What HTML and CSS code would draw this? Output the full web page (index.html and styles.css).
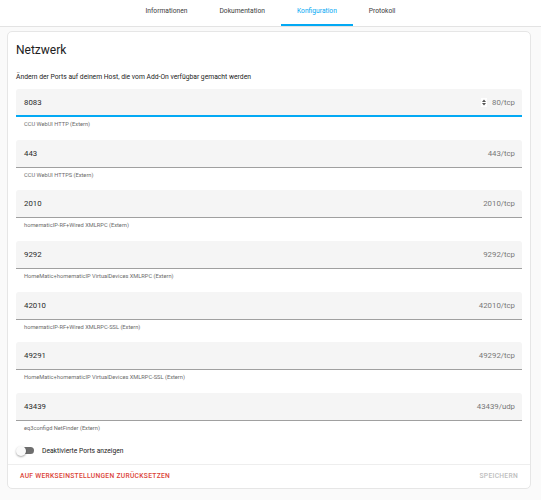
FILE: index.html
```html
<!DOCTYPE html>
<html lang="de">
<head>
<meta charset="utf-8">
<title>Konfiguration</title>
<link rel="stylesheet" href="styles.css">
</head>
<body>
<nav class="tabs">
  <div class="tab">Informationen</div>
  <div class="tab">Dokumentation</div>
  <div class="tab active">Konfiguration</div>
  <div class="tab">Protokoll</div>
</nav>
<main class="main">
  <section class="card">
    <h1 class="card-header">Netzwerk</h1>
    <div class="card-content">
      <p class="desc">Ändern der Ports auf deinem Host, die vom Add-On verfügbar gemacht werden</p>

      <div class="group">
        <div class="field focused">
          <span class="value">8083</span>
          <svg class="spin" width="6" height="9" viewBox="0 0 6 9"><path d="M3 1.5 L5 4 H1 Z M1 5 H5 L3 7.5 Z" fill="#555"/></svg>
          <span class="suffix">80/tcp</span>
        </div>
        <div class="helper">CCU WebUI HTTP (Extern)</div>
      </div>

      <div class="group">
        <div class="field"><span class="value">443</span><span class="suffix">443/tcp</span></div>
        <div class="helper">CCU WebUI HTTPS (Extern)</div>
      </div>

      <div class="group">
        <div class="field"><span class="value">2010</span><span class="suffix">2010/tcp</span></div>
        <div class="helper">homematicIP-RF+Wired XMLRPC (Extern)</div>
      </div>

      <div class="group">
        <div class="field"><span class="value">9292</span><span class="suffix">9292/tcp</span></div>
        <div class="helper">HomeMatic+homematicIP VirtualDevices XMLRPC (Extern)</div>
      </div>

      <div class="group">
        <div class="field"><span class="value">42010</span><span class="suffix">42010/tcp</span></div>
        <div class="helper">homematicIP-RF+Wired XMLRPC-SSL (Extern)</div>
      </div>

      <div class="group">
        <div class="field"><span class="value">49291</span><span class="suffix">49292/tcp</span></div>
        <div class="helper">HomeMatic+homematicIP VirtualDevices XMLRPC-SSL (Extern)</div>
      </div>

      <div class="group">
        <div class="field"><span class="value">43439</span><span class="suffix">43439/udp</span></div>
        <div class="helper">eq3configd NetFinder (Extern)</div>
      </div>

      <div class="toggle-row">
        <span class="switch"><span class="track"></span><span class="knob"></span></span>
        <span class="toggle-label">Deaktivierte Ports anzeigen</span>
      </div>
    </div>
    <div class="card-actions">
      <span class="btn reset">Auf Werkseinstellungen zurücksetzen</span>
      <span class="btn save">Speichern</span>
    </div>
  </section>
</main>
</body>
</html>
```

FILE: styles.css
```css
* { box-sizing: border-box; }

html, body {
  margin: 0;
  padding: 0;
  background: #fafafa;
  font-family: Roboto, "Liberation Sans", sans-serif;
  color: #212121;
}

.tabs {
  display: flex;
  justify-content: center;
  background: #fff;
  height: 27px;
  border-bottom: 1px solid #e3e3e3;
}

.tab {
  position: relative;
  padding: 0 16px;
  font-size: 6.7px;
  line-height: 23px;
  color: #3c3c3c;
}

.tab.active { color: #03a9f4; }

.tab.active::after {
  content: "";
  position: absolute;
  left: 0;
  right: 0;
  bottom: 0;
  height: 2px;
  background: #03a9f4;
}

.main {
  padding: 4px 10px 12px 7px;
}

.card {
  background: #fff;
  border: 1px solid #e6e6e6;
  border-radius: 5px;
}

.card-header {
  margin: 0;
  padding: 10px 8px 0;
  font-size: 12px;
  line-height: 16px;
  font-weight: 400;
  color: #212121;
}

.card-content {
  padding: 13.5px 8px 6px;
}

.desc {
  margin: 0 0 7.5px;
  font-size: 6.75px;
  line-height: 10px;
  color: #212121;
}

.group {
  height: 50.67px;
}

.field {
  display: flex;
  align-items: center;
  height: 28px;
  padding: 0 7px 0 8px;
  background: #f5f5f5;
  border-radius: 3px 3px 0 0;
  border-bottom: 1px solid #a0a0a0;
  font-size: 7.8px;
}

.field.focused {
  border-bottom: 2px solid #03a9f4;
}

.value {
  flex: 1;
  color: #2a2a2a;
}

.spin {
  margin-right: 5px;
  background: #fff;
}

.suffix {
  color: #777;
}

.helper {
  margin-top: 3px;
  padding-left: 8px;
  font-size: 5.7px;
  line-height: 8px;
  color: #6b6b6b;
}

.toggle-row {
  display: flex;
  align-items: center;
  height: 14px;
}

.switch {
  position: relative;
  width: 18px;
  height: 10px;
  margin-right: 8px;
}

.track {
  position: absolute;
  left: 1px;
  top: 1.5px;
  width: 17px;
  height: 7px;
  border-radius: 4px;
  background: #6e6e6e;
}

.knob {
  position: absolute;
  left: 0;
  top: 0;
  width: 10px;
  height: 10px;
  border-radius: 50%;
  background: #fafafa;
  box-shadow: 0 1px 2px rgba(0, 0, 0, 0.35);
}

.toggle-label {
  font-size: 6.7px;
  color: #212121;
}

.card-actions {
  display: flex;
  justify-content: space-between;
  align-items: center;
  height: 24px;
  padding: 0 12px;
  border-top: 1px solid #eeeeee;
}

.btn {
  font-size: 6.7px;
  font-weight: 500;
  letter-spacing: 0.3px;
  text-transform: uppercase;
}

.reset { color: #db4437; }

.save { color: #bdbdbd; }
```
